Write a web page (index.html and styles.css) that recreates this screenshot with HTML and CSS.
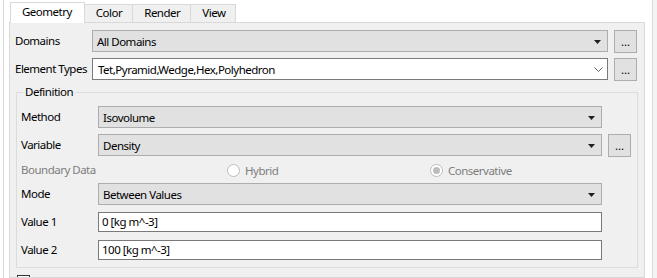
FILE: index.html
```html
<!DOCTYPE html>
<html lang="en">
<head>
    <meta charset="UTF-8">
    <meta name="viewport" content="width=device-width, initial-scale=1.0">
    <title>Isovolume Geometry</title>
    <link rel="stylesheet" href="styles.css">
</head>
<body>
    <div class="window">
        <div class="edge"></div>

        <div class="tabwidget">
            <!-- Tab headers -->
            <div class="tabbar">
                <div class="tab active">Geometry</div>
                <div class="tab">Color</div>
                <div class="tab">Render</div>
                <div class="tab">View</div>
            </div>

            <div class="pane">
                <div class="form outer">
                    <div class="row">
                        <span class="label">Domains</span>
                        <div class="combo">
                            <span class="value">All Domains</span>
                            <svg class="arrow" width="7" height="4" viewBox="0 0 7 4"><polygon points="0,0 7,0 3.5,4" fill="#1f1f1f"/></svg>
                        </div>
                        <button class="more">...</button>
                    </div>
                    <div class="row">
                        <span class="label">Element Types</span>
                        <div class="combo editable">
                            <span class="value">Tet,Pyramid,Wedge,Hex,Polyhedron</span>
                            <svg class="chevron" width="9" height="5" viewBox="0 0 9 5"><polyline points="0.5,0.5 4.5,4.5 8.5,0.5" fill="none" stroke="#606060" stroke-width="1"/></svg>
                        </div>
                        <button class="more">...</button>
                    </div>
                </div>

                <!-- Definition group -->
                <fieldset class="group">
                    <legend>Definition</legend>
                    <div class="form">
                        <div class="row">
                            <span class="label">Method</span>
                            <div class="combo no-more">
                                <span class="value">Isovolume</span>
                                <svg class="arrow" width="7" height="4" viewBox="0 0 7 4"><polygon points="0,0 7,0 3.5,4" fill="#1f1f1f"/></svg>
                            </div>
                        </div>
                        <div class="row">
                            <span class="label">Variable</span>
                            <div class="combo">
                                <span class="value">Density</span>
                                <svg class="arrow" width="7" height="4" viewBox="0 0 7 4"><polygon points="0,0 7,0 3.5,4" fill="#1f1f1f"/></svg>
                            </div>
                            <button class="more">...</button>
                        </div>
                        <div class="row radio-row">
                            <span class="label disabled">Boundary Data</span>
                            <div class="radios">
                                <label class="radio-opt first"><span class="radio"></span>Hybrid</label>
                                <label class="radio-opt"><span class="radio checked"></span>Conservative</label>
                            </div>
                        </div>
                        <div class="row">
                            <span class="label">Mode</span>
                            <div class="combo no-more">
                                <span class="value">Between Values</span>
                                <svg class="arrow" width="7" height="4" viewBox="0 0 7 4"><polygon points="0,0 7,0 3.5,4" fill="#1f1f1f"/></svg>
                            </div>
                        </div>
                        <div class="row">
                            <span class="label">Value 1</span>
                            <div class="input no-more">0 [kg m^-3]</div>
                        </div>
                        <div class="row">
                            <span class="label">Value 2</span>
                            <div class="input no-more">100 [kg m^-3]</div>
                        </div>
                    </div>
                </fieldset>

                <div class="check-row">
                    <span class="checkbox"></span>
                    <span>Apply to all</span>
                </div>
            </div>
        </div>

        <div class="side"></div>
    </div>
</body>
</html>
```

FILE: styles.css
```css
* {
    box-sizing: border-box;
}
body {
    margin: 0;
    background: #fff;
    font-family: "Noto Sans", sans-serif;
    font-size: 11.5px;
    letter-spacing: -0.5px;
    color: #000;
    overflow: hidden;
}
.window {
    display: flex;
    height: 278px;
}
.edge {
    width: 4px;
    border-right: 1px solid #dadada;
}
.tabwidget {
    margin-left: 5px;
    width: 636px;
    display: flex;
    flex-direction: column;
}
.side {
    flex: 1;
    margin-left: 7px;
    border-left: 1px solid #dadada;
    background: #f3f3f3;
}

/* tabs */
.tabbar {
    display: flex;
    align-items: flex-end;
    height: 23px;
    padding-left: 1px;
    border-bottom: 1px solid #d9d9d9;
}
.tab {
    height: 18px;
    line-height: 16px;
    padding: 0 10px 0 11px;
    border: 1px solid #d9d9d9;
    border-bottom: none;
    background: #f0f0f0;
    text-align: center;
}
.tab + .tab {
    border-left: none;
}
.tab.active {
    height: 21px;
    margin-bottom: -1px;
    padding: 1px 12px 0 11px;
    background: #fff;
}

.pane {
    flex: 1;
    background: #f0f0f0;
    border: 1px solid #d9d9d9;
    border-top: none;
    padding: 7px 7px 0 5px;
    overflow: hidden;
}

/* form rows */
.form {
    display: flex;
    flex-direction: column;
    gap: 6px;
}
.form.outer {
    gap: 5px;
}
.row {
    display: flex;
    align-items: flex-start;
}
.label {
    width: 77px;
    flex: none;
    height: 22px;
    line-height: 22px;
    white-space: nowrap;
}
.label.disabled,
.radio-opt {
    color: #7d7d7d;
}
.combo {
    flex: 1;
    display: flex;
    align-items: center;
    height: 22px;
    padding: 0 6px 0 4px;
    background: #e1e1e1;
    border: 1px solid #adadad;
}
.combo.editable {
    background: #fff;
    border-color: #7a7a7a;
    padding-left: 5px;
    padding-right: 4px;
}
.combo .value {
    flex: 1;
    white-space: nowrap;
}
.arrow {
    margin-top: 2px;
}
.chevron {
    margin-top: 1px;
}
.no-more {
    margin-right: 29px;
}
.more {
    width: 23px;
    height: 23px;
    margin-left: 6px;
    padding: 0;
    font: inherit;
    line-height: 20px;
    background: #e1e1e1;
    border: 1px solid #adadad;
    color: #000;
}
.input {
    flex: 1;
    height: 20px;
    margin-top: 1px;
    line-height: 18px;
    padding-left: 3px;
    background: #fff;
    border: 1px solid #7a7a7a;
}

/* radio buttons */
.radio-row .label {
    height: 14px;
    line-height: 14px;
}
.radios {
    display: flex;
    padding-left: 129px;
}
.radio-opt {
    display: flex;
    align-items: center;
    height: 14px;
    gap: 5px;
}
.radio-opt.first {
    width: 203px;
}
.radio {
    width: 13px;
    height: 13px;
    border: 1px solid #bcbcbc;
    border-radius: 50%;
    background: #fff;
    display: flex;
    align-items: center;
    justify-content: center;
}
.radio.checked::after {
    content: "";
    width: 7px;
    height: 7px;
    border-radius: 50%;
    background: #bcbcbc;
}

/* group box */
.group {
    margin: 3px -1px 0 1px;
    padding: 6px 6px 6px 4px;
    border: 1px solid #dcdcdc;
    min-width: 0;
}
.group legend {
    margin-left: 2px;
    padding: 0 2px;
    line-height: 16px;
}

.check-row {
    display: flex;
    align-items: flex-start;
    gap: 5px;
    margin: 7px 0 0 2px;
}
.checkbox {
    width: 13px;
    height: 13px;
    border: 1px solid #333;
    background: #fff;
    flex: none;
}
```
